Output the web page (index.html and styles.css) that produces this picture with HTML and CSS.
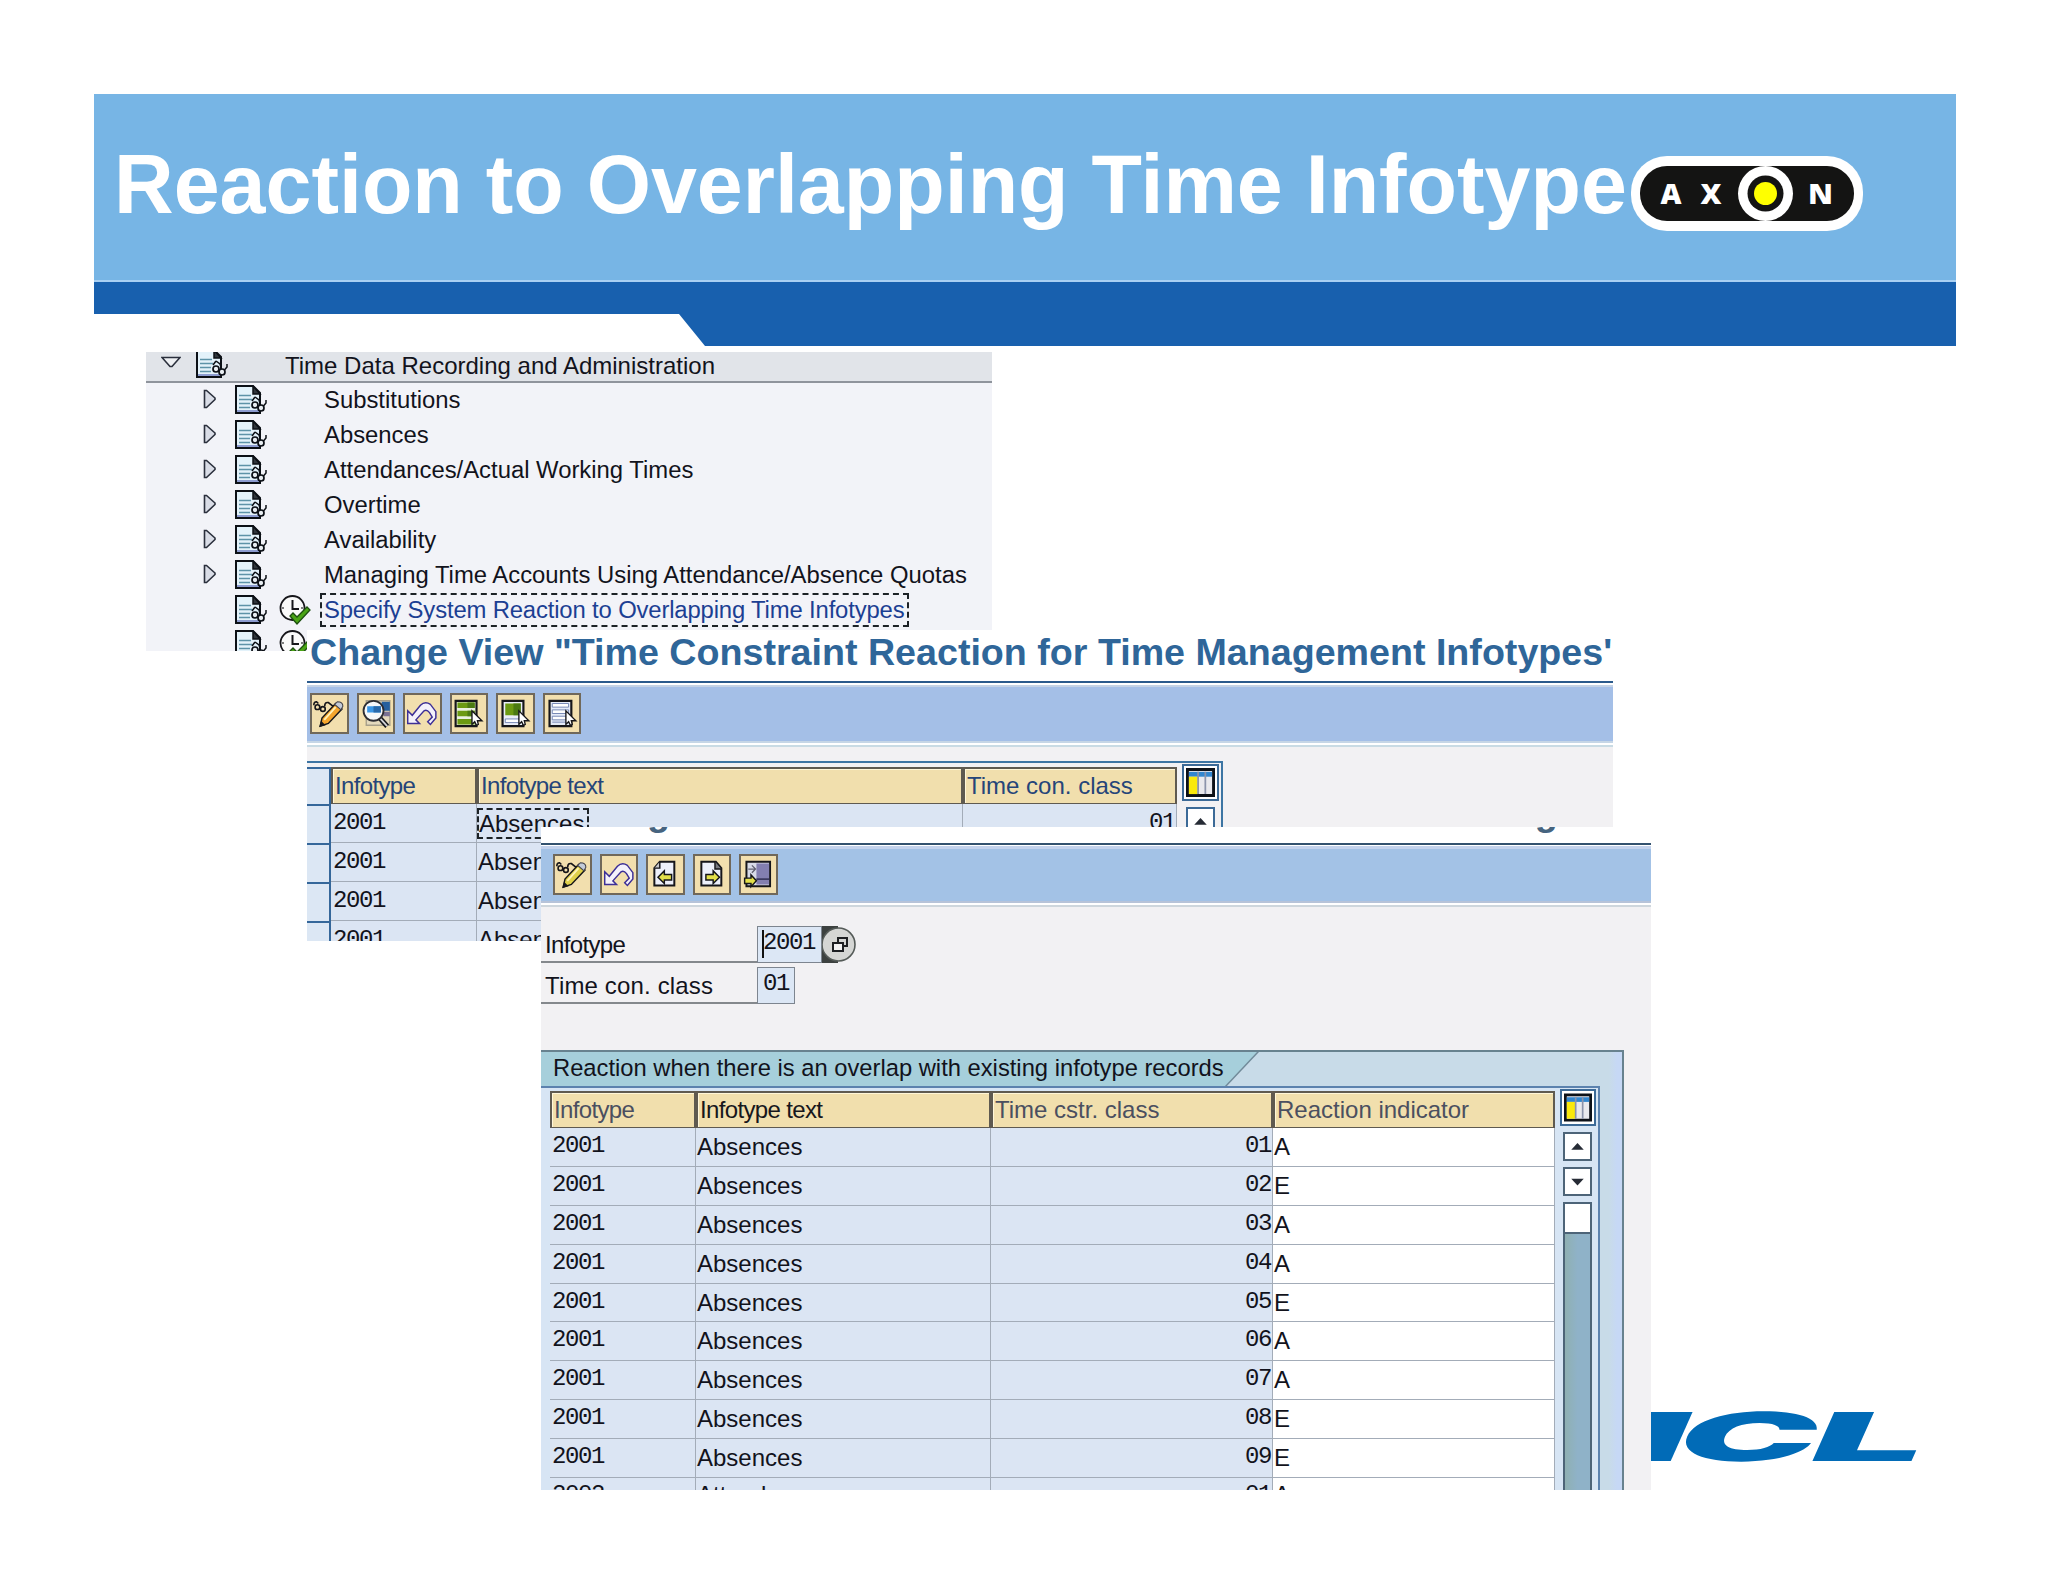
FILE: index.html
```html
<!doctype html>
<html lang="en">
<head>
    <meta charset="UTF-8">
    <meta name="viewport" content="width=device-width, initial-scale=1.0">
    <link rel="stylesheet" href="styles.css">
    <title>Reaction to Overlapping Time Infotype</title>
</head>
<body>
<svg class="defs" width="0" height="0">
    <symbol id="doc" viewBox="0 0 32 30">
        <path d="M1 1H18L25 8V28H1z" fill="#e3f2fa" stroke="#0c1016" stroke-width="2"/>
        <path d="M2 26H24" stroke="#8d9cd0" stroke-width="2"/>
        <path d="M4 10.500H16M4 14.500H17M4 18.500H15M4 22.500H15" stroke="#5d93a8" stroke-width="1.500"/>
        <path d="M18 1V9H25z" fill="#30363c" stroke="#0c1016" stroke-width="1.500"/>
        <path d="M17 16l3-4M20 12l4 3 1 3" fill="none" stroke="#0c1016" stroke-width="1.500"/>
        <circle cx="20" cy="20" r="3" fill="#e9eef2" stroke="#0c1016" stroke-width="1.700"/>
        <circle cx="26" cy="23" r="3" fill="#e9eef2" stroke="#0c1016" stroke-width="1.700"/>
        <path d="M28.500 21L31 18V15" fill="none" stroke="#0c1016" stroke-width="1.500"/>
    </symbol>
    <symbol id="closed" viewBox="0 0 14 20">
        <path d="M1.500 1.500V18.500H3.500L12 10.500V9L3.500 1.500z" fill="#d9dce6" stroke="#2a2f3c" stroke-width="1.600"/>
    </symbol>
    <symbol id="open" viewBox="0 0 20 12">
        <path d="M1 1.500H19L11 10.500H9z" fill="#eef0f3" stroke="#2a2f3c" stroke-width="1.600"/>
    </symbol>
    <symbol id="clock" viewBox="0 0 32 30">
        <circle cx="13.500" cy="13" r="12" fill="#fafafa" stroke="#16161a" stroke-width="1.800"/>
        <path d="M13.500 5V14H20" fill="none" stroke="#16161a" stroke-width="2"/>
        <path d="M3 13h2M22 13h2M13.500 21v3" stroke="#555" stroke-width="1.500"/>
        <path d="M11 21l3-3 4 4 10-10 3 3-13 14z" fill="#4aa516" stroke="#1d4f10" stroke-width="1.300"/>
    </symbol>
    <symbol id="pencil" viewBox="0 0 38 40">
        <path d="M2 11q0-4 3-4l2 2" fill="none" stroke="#16161a" stroke-width="1.800"/>
        <circle cx="6" cy="13" r="2.600" fill="none" stroke="#16161a" stroke-width="1.800"/>
        <circle cx="12" cy="15" r="2.600" fill="none" stroke="#16161a" stroke-width="1.800"/>
        <path d="M14 12q0-5 4-4l5 4" fill="none" stroke="#16161a" stroke-width="1.800"/>
        <path d="M9 34l2-9L26 9l7 6L18 31z" fill="var(--wood, #f5a52c)" stroke="#16161a" stroke-width="1.600"/>
        <path d="M25 10l3-3q6 0 6 5l-2 4z" fill="#c3cbd8" stroke="#45454d" stroke-width="1.200"/>
        <path d="M13.500 27L26 13" stroke="#fff2b8" stroke-width="2"/>
        <path d="M8 35l2-7 5 5z" fill="#16161a"/>
    </symbol>
    <symbol id="magnify" viewBox="0 0 38 40">
        <path d="M8 6H34V33H8z" fill="#e4d9bd" stroke="#a79f8a" stroke-width="1.500"/>
        <path d="M25 7H34V17H25z" fill="#265f9e"/>
        <path d="M27 18H34V23H27z" fill="#7a7193"/>
        <path d="M22 24l9 10" stroke="#16161a" stroke-width="5.500"/>
        <path d="M22 24l9 10" stroke="#d4d4d8" stroke-width="2"/>
        <circle cx="16" cy="17" r="11" fill="#f5f7fa" stroke="#2c2c32" stroke-width="2"/>
        <path d="M9 12H24V19H9z" fill="#3a96e6"/>
        <path d="M16 12H24V19H16z" fill="#2768ab"/>
    </symbol>
    <symbol id="undo" viewBox="0 0 38 40">
        <path d="M3 17V31H16L12 27 21 17Q24 15 27 19L30 24 25 29 28 32 34 25V18L28 10Q22 6 17 11L8 22z" fill="#f4f1fb" stroke="#3d2f96" stroke-width="1.600"/>
    </symbol>
    <symbol id="cursor" viewBox="0 0 38 40">
        <path d="M22 17V32L25 29 27 33 29 32 28 28H33z" fill="#fff" stroke="#16161a" stroke-width="1.500"/>
    </symbol>
    <symbol id="selall" viewBox="0 0 38 40">
        <path d="M4 6H27V34H4z" fill="#eaf0e0" stroke="#16161a" stroke-width="2.400"/>
        <path d="M6 8H25V14H6zM6 17H25V23H6zM6 26H25V32H6z" fill="#6c9a12"/>
        <path d="M17 8H25V14H17zM17 17H25V23H17z" fill="#4b7a12"/>
        <use href="#cursor"/>
    </symbol>
    <symbol id="selblock" viewBox="0 0 38 40">
        <path d="M5 6H28V34H5z" fill="#eaeef8" stroke="#16161a" stroke-width="2.400"/>
        <path d="M8 9H25V22H8z" fill="#6c9a12"/>
        <path d="M17 9H25V22H17z" fill="#4b7a12"/>
        <path d="M8 26H25V30H8z" fill="#fff" stroke="#6d80b0"/>
        <use href="#cursor" x="1"/>
    </symbol>
    <symbol id="deselect" viewBox="0 0 38 40">
        <path d="M5 6H29V34H5z" fill="#e5ebf8" stroke="#16161a" stroke-width="2.400"/>
        <path d="M8 9H26V13H8zM8 16H26V20H8zM8 23H26V27H8zM8 29.500H26" fill="#fff" stroke="#6d80b0"/>
        <use href="#cursor" x="1"/>
    </symbol>
    <symbol id="prev" viewBox="0 0 38 40">
        <path d="M13 6H29V32H7V13z" fill="#edf0fa" stroke="#16161a" stroke-width="2.200"/>
        <path d="M13 6V13H7" fill="#c9c9cc" stroke="#16161a" stroke-width="1.600"/>
        <path d="M11 23L18 16V20H26V26H18V30z" fill="#e3e04a" stroke="#16161a" stroke-width="1.600"/>
    </symbol>
    <symbol id="next" viewBox="0 0 38 40">
        <path d="M7 6H23L29 13V32H7z" fill="#edf0fa" stroke="#16161a" stroke-width="2.200"/>
        <path d="M22 6V14H29" fill="#77787e" stroke="#16161a" stroke-width="1.600"/>
        <path d="M27 23L20 16V20H12V26H20V30z" fill="#e3e04a" stroke="#16161a" stroke-width="1.600"/>
    </symbol>
    <symbol id="other" viewBox="0 0 38 40">
        <path d="M6 6H32V33H6z" fill="#d8dbe8" stroke="#16161a" stroke-width="2.200"/>
        <path d="M17 8H31V31H17z" fill="#837fb0"/>
        <path d="M17 25H31" stroke="#3c3a60" stroke-width="2"/>
        <path d="M8 14H16M12 10l4 4-4 4" fill="none" stroke="#606070" stroke-width="1.400"/>
        <path d="M17 27L11 20.500V24H4V30H11V33.500z" fill="#e3e04a" stroke="#16161a" stroke-width="1.600"/>
    </symbol>
    <symbol id="config" viewBox="0 0 30 30">
        <path d="M1.500 1.500H28.500V28.500H1.500z" fill="#e9e9ee" stroke="#0d1118" stroke-width="3"/>
        <path d="M3 4H27V9H3z" fill="#3286cf"/>
        <path d="M3 9H12V27H3z" fill="#fae90c"/>
        <path d="M12.500 4V27M20 4V27" stroke="#8b93ab" stroke-width="1.800"/>
    </symbol>
    <symbol id="up" viewBox="0 0 28 28"><path d="M7 17.500L14 10l7 7.500z" fill="#262b35"/></symbol>
    <symbol id="down" viewBox="0 0 28 28"><path d="M7 11L14 18.500 21 11z" fill="#262b35"/></symbol>
</svg>

<div class="slide">
    <header class="banner">
        <h1>Reaction to Overlapping Time Infotype</h1>
        <svg class="axon" viewBox="0 0 232 75">
            <rect width="232" height="75" rx="36" fill="#fff"/>
            <rect x="9" y="10" width="214" height="55" rx="27" fill="#141413"/>
            <circle cx="134.500" cy="37.500" r="27.500" fill="#fff"/>
            <circle cx="134.500" cy="37.500" r="18" fill="#141413"/>
            <circle cx="134.500" cy="37.500" r="11.500" fill="#ffff00"/>
            <g class="axon-text">
                <text x="29.500" y="47.500" textLength="21" lengthAdjust="spacingAndGlyphs">A</text>
                <text x="69.500" y="47.500" textLength="21" lengthAdjust="spacingAndGlyphs">X</text>
                <text x="177" y="47.500" textLength="25" lengthAdjust="spacingAndGlyphs">N</text>
            </g>
        </svg>
    </header>
    <div class="stripe"></div>

    <svg class="brand" viewBox="0 0 280 70">
        <g transform="translate(0 59) skewX(-24)">
            <text x="-39" y="0" textLength="70" lengthAdjust="spacingAndGlyphs">I</text>
            <text x="19" y="0" textLength="139" lengthAdjust="spacingAndGlyphs">C</text>
            <text x="152" y="0" textLength="114" lengthAdjust="spacingAndGlyphs">L</text>
        </g>
    </svg>

    <section class="tree">
        <div class="node root"><svg class="arrow-open"><use href="#open"/></svg><svg class="doc"><use href="#doc"/></svg><span>Time Data Recording and Administration</span></div>
        <div class="node"><svg class="arrow"><use href="#closed"/></svg><svg class="doc"><use href="#doc"/></svg><span>Substitutions</span></div>
        <div class="node"><svg class="arrow"><use href="#closed"/></svg><svg class="doc"><use href="#doc"/></svg><span>Absences</span></div>
        <div class="node"><svg class="arrow"><use href="#closed"/></svg><svg class="doc"><use href="#doc"/></svg><span>Attendances/Actual Working Times</span></div>
        <div class="node"><svg class="arrow"><use href="#closed"/></svg><svg class="doc"><use href="#doc"/></svg><span>Overtime</span></div>
        <div class="node"><svg class="arrow"><use href="#closed"/></svg><svg class="doc"><use href="#doc"/></svg><span>Availability</span></div>
        <div class="node"><svg class="arrow"><use href="#closed"/></svg><svg class="doc"><use href="#doc"/></svg><span>Managing Time Accounts Using Attendance/Absence Quotas</span></div>
        <div class="node leaf"><svg class="doc"><use href="#doc"/></svg><svg class="clock"><use href="#clock"/></svg><span class="focus">Specify System Reaction to Overlapping Time Infotypes</span></div>
        <div class="node leaf"><svg class="doc"><use href="#doc"/></svg><svg class="clock"><use href="#clock"/></svg></div>
    </section>

    <section class="window overview">
        <h2>Change View "Time Constraint Reaction for Time Management Infotypes'</h2>
        <div class="toolbar">
            <svg class="btn"><use href="#pencil"/></svg>
            <svg class="btn"><use href="#magnify"/></svg>
            <svg class="btn"><use href="#undo"/></svg>
            <svg class="btn"><use href="#selall"/></svg>
            <svg class="btn"><use href="#selblock"/></svg>
            <svg class="btn"><use href="#deselect"/></svg>
        </div>
        <div class="grid-frame">
            <div class="grid">
                <div class="row head"><i></i><b class="tight">Infotype</b><b class="tight">Infotype text</b><b>Time con. class</b></div>
                <div class="row"><i></i><span class="code">2001</span><span><em>Absences</em></span><span class="code num">01</span></div>
                <div class="row"><i></i><span class="code">2001</span><span>Absences</span><span></span></div>
                <div class="row"><i></i><span class="code">2001</span><span>Absences</span><span></span></div>
                <div class="row"><i></i><span class="code">2001</span><span>Absences</span><span></span></div>
            </div>
            <div class="scroll">
                <svg class="config"><use href="#config"/></svg>
                <svg class="step"><use href="#up"/></svg>
            </div>
        </div>
    </section>

    <section class="window details">
        <h2><span>Change View "Time Constraint Reaction for Time Management Infotypes"</span></h2>
        <div class="toolbar">
            <svg class="btn"><use href="#pencil"/></svg>
            <svg class="btn"><use href="#undo"/></svg>
            <svg class="btn"><use href="#prev"/></svg>
            <svg class="btn"><use href="#next"/></svg>
            <svg class="btn"><use href="#other"/></svg>
        </div>
        <div class="form">
            <div class="field"><label class="tight">Infotype</label><div class="value code wide caret">2001</div>
                <svg class="match" viewBox="0 0 34 37">
                    <path d="M0 0H16V37H0z" fill="#3c413f"/>
                    <circle cx="16.500" cy="18.500" r="16.500" fill="#d5d6d4" stroke="#555b58" stroke-width="1.600"/>
                    <path d="M16 17V12H25V20H21" fill="none" stroke="#1d1f22" stroke-width="2"/>
                    <path d="M11 17H21V25H11z" fill="#f2f2f2" stroke="#1d1f22" stroke-width="2"/>
                </svg>
            </div>
            <div class="field"><label>Time con. class</label><div class="value code">01</div></div>
        </div>
        <div class="group">
            <div class="group-title"><span>Reaction when there is an overlap with existing infotype records</span></div>
            <div class="grid-frame">
                <div class="grid">
                    <div class="row head"><b class="tight grey">Infotype</b><b class="tight black">Infotype text</b><b class="grey">Time cstr. class</b><b class="grey">Reaction indicator</b></div>
                    <div class="row"><span class="code">2001</span><span>Absences</span><span class="code num">01</span><span class="edit">A</span></div>
                    <div class="row"><span class="code">2001</span><span>Absences</span><span class="code num">02</span><span class="edit">E</span></div>
                    <div class="row"><span class="code">2001</span><span>Absences</span><span class="code num">03</span><span class="edit">A</span></div>
                    <div class="row"><span class="code">2001</span><span>Absences</span><span class="code num">04</span><span class="edit">A</span></div>
                    <div class="row"><span class="code">2001</span><span>Absences</span><span class="code num">05</span><span class="edit">E</span></div>
                    <div class="row"><span class="code">2001</span><span>Absences</span><span class="code num">06</span><span class="edit">A</span></div>
                    <div class="row"><span class="code">2001</span><span>Absences</span><span class="code num">07</span><span class="edit">A</span></div>
                    <div class="row"><span class="code">2001</span><span>Absences</span><span class="code num">08</span><span class="edit">E</span></div>
                    <div class="row"><span class="code">2001</span><span>Absences</span><span class="code num">09</span><span class="edit">E</span></div>
                    <div class="row last"><span class="code">2002</span><span>Attend.</span><span class="code num">01</span><span class="edit">A</span></div>
                </div>
                <div class="scroll">
                    <svg class="config"><use href="#config"/></svg>
                    <svg class="step"><use href="#up"/></svg>
                    <svg class="step"><use href="#down"/></svg>
                    <div class="track"><div class="thumb"></div></div>
                </div>
            </div>
        </div>
    </section>
</div>
</body>
</html>
```
FILE: styles.css
```css
* {
    box-sizing: border-box;
}
body {
    margin: 0;
    background: #fff;
    font-family: "Liberation Sans", Arial, sans-serif;
    font-size: 24px;
    color: #12131c;
}
h1, h2 {
    margin: 0;
    font-weight: bold;
    white-space: nowrap;
}
svg {
    display: block;
    flex: none;
}
.defs {
    position: absolute;
}
.slide {
    position: relative;
    width: 2048px;
    height: 1582px;
    padding: 94px 92px 0 94px;
    overflow: hidden;
}

/* banner */
.banner {
    display: flex;
    height: 188px;
    padding-left: 20px;
    background: #77b5e5;
    border-bottom: 2px solid #a9d0f3;
}
.banner h1 {
    width: 1517px;
    padding-top: 43px;
    font-size: 82.6px;
    line-height: 95px;
    color: #fff;
}
.axon {
    width: 232px;
    height: 75px;
    margin-top: 62px;
}
.axon-text {
    font: 800 28px "Open Sans", "Liberation Sans", sans-serif;
    fill: #fff;
}
.stripe {
    height: 64px;
    background: #1860ae;
    clip-path: polygon(0 0, 100% 0, 100% 100%, 611px 100%, 585px 32px, 0 32px);
}
.brand {
    position: absolute;
    left: 1651px;
    top: 1402px;
    width: 280px;
    height: 70px;
}
.brand text {
    font: 900 67.4px Inter, "Liberation Sans", sans-serif;
    fill: #016bb7;
}

/* tree */
.tree {
    position: absolute;
    left: 146px;
    top: 352px;
    width: 846px;
    height: 299px;
    overflow: hidden;
    background: #f2f3f8;
    font-size: 23.85px;
}
.node {
    display: flex;
    align-items: center;
    height: 34.9px;
    padding-left: 57px;
    white-space: nowrap;
}
.node.root {
    height: 31px;
    padding: 0 0 2px 15px;
    background: #e1e4e9;
    border-bottom: 2px solid #8f949c;
    font-size: 24px;
}
.arrow-open {
    width: 20px;
    height: 12px;
    margin-right: 15px;
    margin-top: -8px;
}
.arrow {
    width: 14px;
    height: 20px;
    margin-right: 18px;
    margin-top: -2px;
}
.doc {
    width: 32px;
    height: 30px;
}
.arrow + .doc + span {
    margin-left: 57px;
}
.root .doc {
    margin-top: -4px;
}
.root span {
    margin-left: 57px;
}
.leaf {
    padding-left: 89px;
}
.clock {
    width: 32px;
    height: 30px;
    margin-left: 12px;
}
.focus {
    height: 34px;
    margin-left: 9px;
    padding: 0 3px 0 2px;
    border: 2px dashed #1c2226;
    line-height: 30px;
    letter-spacing: -.15px;
    color: #1c3f93;
}

/* windows */
.window {
    position: absolute;
    overflow: hidden;
    background: #f2f1f3;
}
.window h2 {
    background: #fff;
    font-size: 37.63px;
    color: #2f6699;
}
.toolbar {
    display: flex;
    gap: 8px;
    height: 64px;
    padding: 10px 0 0 3px;
    background: linear-gradient(#fff 0 2px, #c3d2e6 2px 4px, #a4bfe7 4px 58px, #c6d6e6 58px 60px, #fff 60px 62px, #c9dbe4 62px 64px);
}
.btn {
    width: 38.5px;
    height: 41px;
    background: #f2dfae;
    border: 2px solid #70685a;
}
.tight {
    letter-spacing: -.65px;
}
.code {
    font-family: "Liberation Mono", monospace;
    letter-spacing: -1.4px;
}
.grid-frame {
    display: flex;
}
.row {
    display: grid;
    height: 38.9px;
}
.row > span {
    height: 38.9px;
    padding-left: 1px;
    background: #dbe5f3;
    border-right: 1.5px solid #a3acb8;
    border-bottom: 1.5px solid #a3acb8;
    line-height: 38px;
}
.row > .code {
    padding-left: 2px;
    line-height: 36px;
}
.row > .num {
    padding-right: 1px;
    text-align: right;
}
.row.head > b {
    padding-left: 2px;
    background: #f1dfad;
    border: 2px solid #5f5a50;
    border-bottom-width: 4px;
    box-shadow: inset 1px 1px #fff6d8;
    font-weight: normal;
    color: #254579;
}
.row.head > .grey {
    color: #4b4f60;
}
.row.head > .black {
    color: #17171c;
}
.config, .step {
    background: #fff;
    border: 2px solid #3c6a97;
}
.config {
    width: 37px;
    height: 37px;
    padding: 2px;
}
.step {
    width: 29px;
    height: 29px;
}

.overview {
    left: 307px;
    top: 630px;
    width: 1306px;
    height: 311px;
}
.overview h2 {
    height: 53px;
    padding: 1px 0 0 3px;
    border-bottom: 2px solid #2b5a8c;
    line-height: 43px;
}
.overview .grid-frame {
    width: 916px;
    height: 200px;
    margin-top: 14px;
    padding-top: 4px;
    border: solid #3d75a3;
    border-width: 2px 2px 0 0;
}
.overview .row {
    grid-template-columns: 24px 146px 486px 214px;
}
.overview .row.head {
    height: 37px;
    line-height: 34px;
}
.overview .row > .code {
    line-height: 38px;
}
.overview .row > i {
    background: #dce7f4;
    border-right: 2px solid #35679a;
    border-top: 2px solid #35679a;
}
.overview em {
    display: inline-block;
    height: 31px;
    margin: 4px 0 0 -1px;
    padding-right: 3px;
    border: 2px dashed #1c2226;
    font-style: normal;
    line-height: 28px;
}
.overview .scroll {
    padding-left: 5px;
    margin-top: -3px;
}
.overview .step {
    margin: 6px 0 0 4px;
}

.details {
    left: 541px;
    top: 827px;
    width: 1110px;
    height: 663px;
}
.details h2 {
    height: 18px;
    padding-left: 12px;
    border-bottom: 2px solid #33526f;
    line-height: 43px;
    color: #46647f;
    overflow: hidden;
}
/* the title is scrolled up, only its descenders stay in view */
.details h2 span {
    display: block;
    margin-top: -36px;
}
.details .toolbar {
    --wood: #dfd04a;
    height: 62px;
    padding: 9px 0 0 12px;
    background: linear-gradient(#fff 0 1px, #c3d2ec 1px 4px, #a3c2e6 4px 56px, #b7c3d8 56px 58px, #fff 58px 60px, #ced6dc 60px 62px);
}
.form {
    height: 143px;
    padding-top: 19px;
}
.field {
    display: flex;
    height: 37px;
    margin-bottom: 4px;
}
.field label {
    width: 216px;
    padding-left: 4px;
    border-bottom: 2px solid #84888c;
    line-height: 37px;
}
.field label:not(.tight) {
    letter-spacing: .15px;
}
.value {
    width: 38px;
    padding-left: 5px;
    background: #dce7f5;
    border: 1.5px solid #7d858f;
    line-height: 32px;
}
.value.wide {
    width: 65px;
}
.caret::before {
    content: "";
    position: absolute;
    width: 2px;
    height: 28px;
    margin: 3px 0 0 -1px;
    background: #111;
}
.match {
    width: 34px;
    height: 37px;
}
.group {
    width: 1083px;
    height: 500px;
    padding-right: 24px;
    background: linear-gradient(90deg, #c8dbe8 0 1068px, #c6d8f5 1076px);
    border: solid #68828f;
    border-width: 2px 2px 0 0;
}
.group-title {
    width: 720px;
    height: 34px;
    background: #718a99;
    clip-path: polygon(0 0, 718px 0, 685px 35px, 0 35px);
}
.group-title span {
    display: block;
    height: 34px;
    padding-left: 12px;
    background: #a6cfdb;
    clip-path: polygon(0 0, 716px 0, 683px 35px, 0 35px);
    font-size: 23.75px;
    line-height: 31px;
    white-space: nowrap;
}
.details .grid-frame {
    width: 1059px;
    height: 430px;
    padding: 3px 0 0 9px;
    border: solid #5c82ae;
    border-width: 2px 2px 0 0;
    background: #d7e5f4;
}
.details .row {
    grid-template-columns: 146px 295px 282px 282px;
}
.details .row.head {
    height: 37px;
    line-height: 34px;
}
.details .row > .edit {
    padding-left: 1px;
    background: #fff;
    line-height: 37px;
}
.details .last > span,
.details .last > .edit {
    line-height: 34px;
}
.details .scroll {
    padding-left: 5px;
    margin-top: -2px;
}
.details .config {
    width: 36px;
}
.details .step {
    margin: 6px 0 0 3px;
    border-color: #4d6478;
}
.track {
    width: 29px;
    height: 300px;
    margin: 6px 0 0 3px;
    background: linear-gradient(90deg, #8fb0b2, #8fb2c8 50%);
    border: solid #4d6478;
    border-width: 2px 2px 0;
}
.thumb {
    height: 30px;
    background: #fff;
    border-bottom: 2px solid #4d6478;
}
```
